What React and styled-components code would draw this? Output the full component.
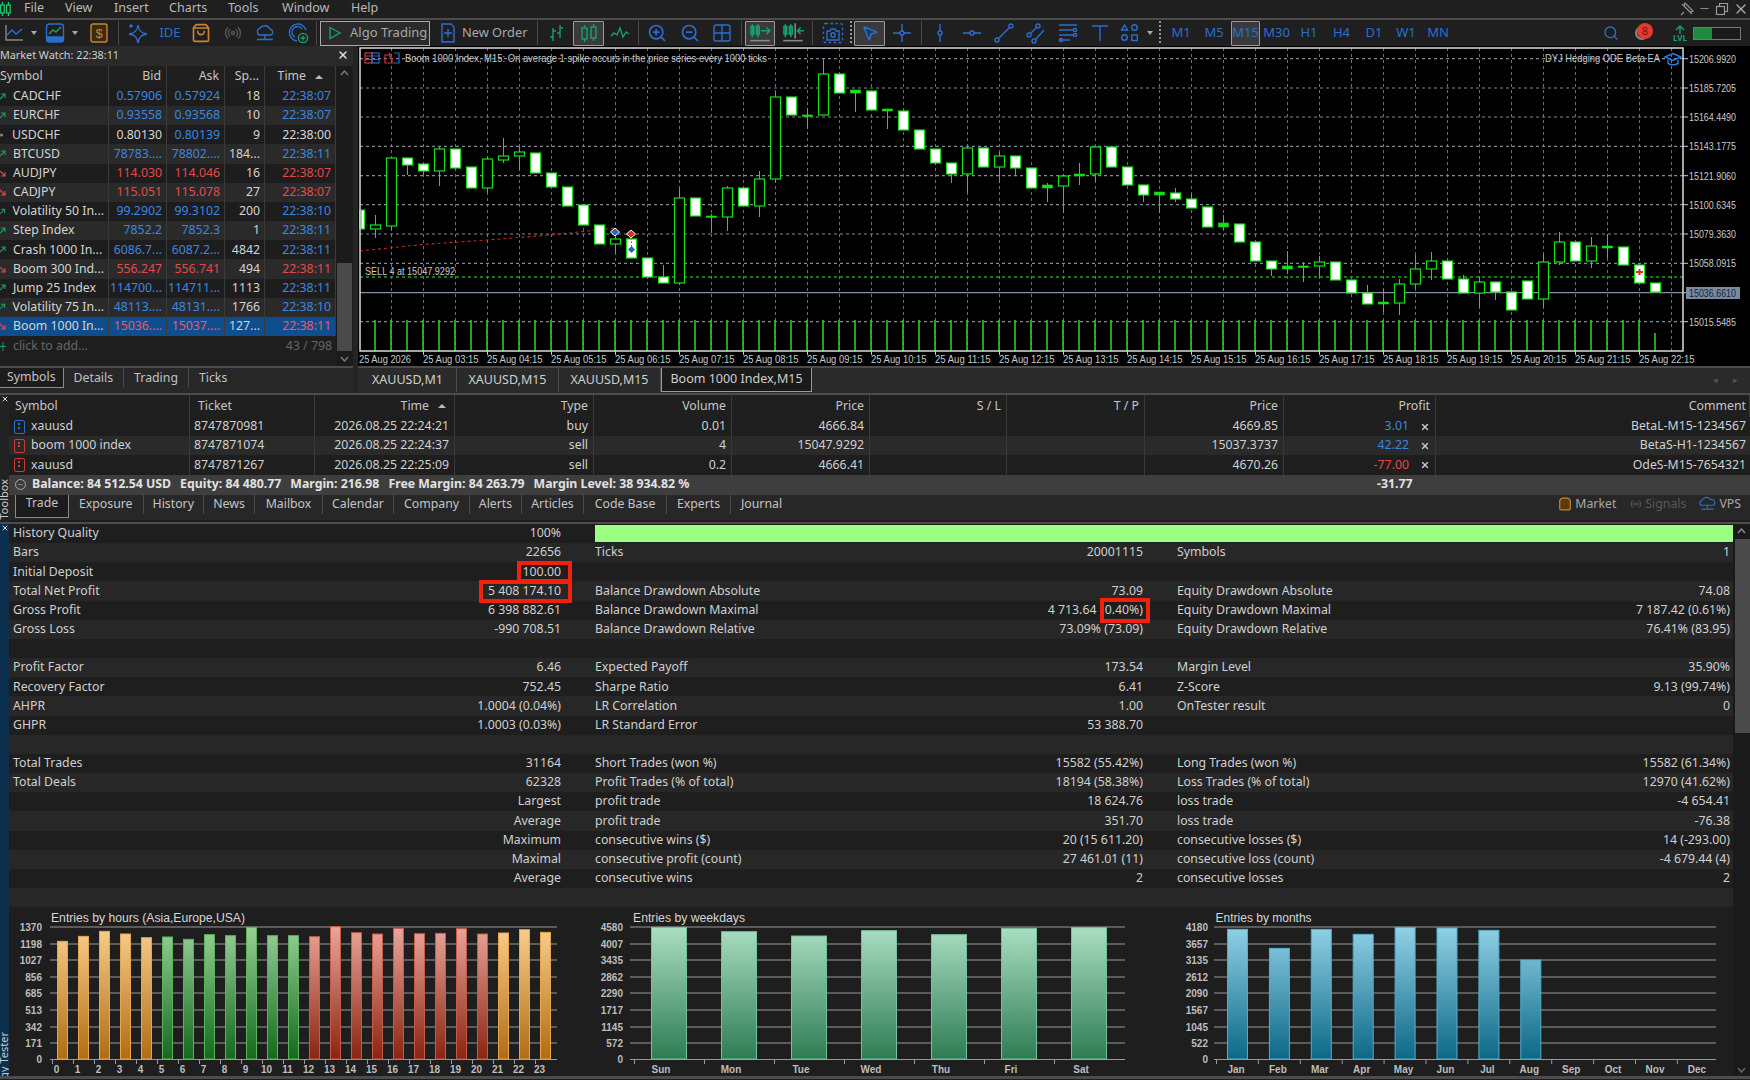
import React from 'react';
import styled, { createGlobalStyle } from 'styled-components';
import { Search, ZoomIn, ZoomOut, ShoppingBag, Radio, MousePointer2, X, Minus } from 'lucide-react';

const Global = createGlobalStyle`
  html, body { margin: 0; padding: 0; background: #1e1e1e; }
  * { box-sizing: border-box; }
`;

const BLUE = '#2a6fd0';
const ORANGE = '#c9842e';
const TEAL = '#16a06c';

const Page = styled.div`
  width: 1750px; height: 1080px; overflow: hidden; background: #1e1e1e;
  font-family: "Noto Sans", "Open Sans", sans-serif; font-size: 12.3px; color: #d4d4d4;
  display: flex; flex-direction: column; line-height: 1.35;
`;
const MenuBar = styled.div`
  height: 20px; flex: none; display: flex; align-items: center; position: relative;
  border-bottom: 2px solid #4c4c4c; background: #1f1f1f; padding-bottom: 1px;
`;
const MenuItem = styled.span`
  width: ${p => p.$w}px; flex: none; color: #b9b9b9; font-size: 12.5px;
`;
const Logo = styled.svg` width: 12px; height: 16px; margin: 0 12px 0 0; flex: none; `;
const WinButtons = styled.div`
  margin-left: auto; display: flex; align-items: center; gap: 4px; padding-right: 1px; color: #9a9a9a;
`;
const Toolbar = styled.div`
  height: 26px; flex: none; display: flex; align-items: center; background: #1f1f1f; position: relative;
`;
const Tool = styled.div`
  width: ${p => p.$w || 32}px; height: 25px; flex: none; display: flex; align-items: center; justify-content: center;
  color: ${p => p.$c || BLUE}; font-size: 13px;
  ${p => p.$active ? 'border: 1.5px solid #9a9a9a; border-radius: 1px; background: #3a3a3a; ' : ''}
`;
const Sep = styled.div`
  width: 1px; height: 24px; background: #4a4a4a; flex: none; margin: 0 ${p => p.$m || 2}px;
`;
const Dots = styled.div`
  width: 2px; height: 24px; flex: none; margin: 0 ${p => p.$m || 2}px;
  background: repeating-linear-gradient(to bottom, #999 0 2px, transparent 2px 4px);
`;
const Caret = styled.div`
  width: 0; height: 0; border-left: 3.5px solid transparent; border-right: 3.5px solid transparent;
  border-top: 4px solid #aaa; flex: none; margin-left: 3px;
`;
const AlgoBtn = styled.div`
  width: 110px; height: 25px; flex: none; display: flex; align-items: center; gap: 8px; padding-left: 7px;
  border: 1.5px solid #a8a8a8; background: #2a2a2a; color: #a8a8a8; font-size: 13px;
`;
const OrderBtn = styled.div`
  width: 102px; height: 25px; flex: none; display: flex; align-items: center; gap: 3px; padding-left: 4px;
  color: #a8a8a8; font-size: 12.8px;
`;
const Gap = styled.div` flex: none; width: ${p => p.$w}px; `;
const Badge = styled.span`
  position: absolute; right: -6px; top: -5px; width: 16px; height: 16px; border-radius: 50%;
  background: #e23a2c; color: #6e1a12; font-size: 11px; display: flex; align-items: center; justify-content: center;
`;
const BellWrap = styled.div`
  position: relative; width: 14px; height: 14px; border-radius: 50%; border: 2px solid #888; margin-left: 16px; flex: none;
`;
const Level = styled.div`
  width: 20px; flex: none; margin-left: 21px; color: ${TEAL}; font-size: 8px; line-height: 1; font-weight: 700; display: flex; flex-direction: column; align-items: center;
`;
const Progress = styled.div`
  width: 48px; height: 13px; margin-left: 3px; flex: none; border: 1px solid #777; background: #1a1a1a;
  &::before { content: ''; display: block; width: 18px; height: 100%; background: #1d8a3e; }
`;

/* workspace */
const Workspace = styled.div` height: 347px; flex: none; display: flex; `;
const Left = styled.div` width: 353px; flex: none; display: flex; flex-direction: column; `;
const MWTitle = styled.div`
  height: 20px; flex: none; display: flex; align-items: center; justify-content: space-between;
  background: #2a2a2a; padding: 0 4px 2px 0; color: #cfcfcf; font-size: 10.8px;
`;
const MWBody = styled.div` flex: none; height: 300px; display: flex; `;
const MWTable = styled.div` width: 336px; flex: none; display: flex; flex-direction: column; `;
const MWHead = styled.div`
  height: 21px; flex: none; display: grid; grid-template-columns: 109px 58px 58px 40px 71px; background: #1f1f1f;
`;
const HCell = styled.div`
  display: flex; align-items: center; justify-content: ${p => p.$left ? 'flex-start' : 'flex-end'};
  padding: 0 ${p => p.$pr ?? 5}px 0 ${p => p.$pl ?? 0}px; border-right: 1px solid #3a3a3a; color: #c6c6c6; overflow: hidden; gap: 9px;
`;
const MWRow = styled.div`
  height: 19.17px; flex: none; display: grid; grid-template-columns: 109px 58px 58px 40px 71px;
  background: ${p => p.$sel ? '#0e4e8e' : p.$alt ? '#2a2a2a' : '#1d1d1d'};
`;
const Cell = styled.div`
  display: flex; align-items: center; justify-content: ${p => p.$left ? 'flex-start' : 'flex-end'};
  padding-right: 4px; border-right: 1px solid #3b3b3b; overflow: hidden; white-space: nowrap;
  color: ${p => p.$c || '#d4d4d4'};
  gap: 7px;
`;
const AddRow = styled.div`
  height: 20px; flex: none; display: flex; align-items: center; justify-content: space-between; color: #666; padding: 0 4px 0 0;
`;
const AddLabel = styled.span` display: flex; align-items: center; gap: 7px; `;
const MWScroll = styled.div`
  width: 17px; flex: none; position: relative; background: #1b1b1b; display: flex; flex-direction: column; align-items: center;
  justify-content: space-between; padding: 4px 0; color: #666;
  &::before { content: ''; position: absolute; left: 1px; right: 1px; top: 197px; height: 88px; background: #4a4a4a; }
`;
const SmallTabs = styled.div`
  margin-top: auto; height: 27px; flex: none; display: flex; align-items: flex-start; border-top: 2px solid #4c4c4c; background: #272727;
`;
const SmallTab = styled.div`
  height: 20px; display: flex; align-items: center; flex: none; padding: 0 ${p => p.$p || 10}px; color: #c2c2c2;
  ${p => p.$active ? 'background:#1c1c1c; border-right:1.5px solid #8a8a8a; border-bottom:1.5px solid #8a8a8a; margin-right:0;' : 'border-right:1px solid #4a4a4a;'}
  ${p => p.$last ? 'border-right:none;' : ''}
`;
const Splitter = styled.div` width: 5px; flex: none; background: #242424; `;
const ChartCol = styled.div` flex: 1; min-width: 0; display: flex; flex-direction: column; background: #000; `;
const ChartSvg = styled.svg` display: block; flex: none; `;
const ChartTabs = styled.div`
  height: 27px; flex: none; display: flex; align-items: flex-start; background: #2a2a2a; border-top: 2px solid #4c4c4c; padding-left: 1px;
  position: relative;
`;
const ChartTab = styled.div`
  height: 24px; flex: none; display: flex; align-items: center; justify-content: center; width: ${p => p.$w}px;
  color: #cfcfcf; font-size: 12.5px;
  ${p => p.$active ? 'background:#1a1a1a; border-left:1.5px solid #9a9a9a; border-right:1.5px solid #9a9a9a; border-bottom:1.5px solid #9a9a9a;' : 'border-right:1px solid #4c4c4c;'}
`;
const TabArrows = styled.div`
  position: absolute; right: 12px; top: 6px; display: flex; gap: 15px; color: #555; font-size: 9px;
`;

/* toolbox */
const Section = styled.div` flex: none; display: flex; height: ${p => p.$h}px; border-top: 2px solid #4c4c4c; `;
const Strip = styled.div`
  width: 9px; flex: none; display: flex; flex-direction: column; justify-content: space-between; align-items: center; overflow: hidden;
  background: ${p => p.$navy ? '#0d2f4e' : '#222'}; color: #d8d8d8; font-size: 11px;
`;
const StripLabel = styled.span`
  writing-mode: vertical-rl; transform: rotate(180deg); white-space: nowrap; font-size: 11px; color: #ccc; margin-bottom: ${p => p.$b || 0}px;
`;
const Col = styled.div` flex: 1; min-width: 0; display: flex; flex-direction: column; `;
const tradeCols = '181px 125px 140px 139px 138px 138px 137px 138px 139px 152px 1fr';
const TradeHead = styled.div`
  height: 22px; flex: none; display: grid; grid-template-columns: ${tradeCols}; background: #1f1f1f;
`;
const TradeRow = styled.div`
  height: 19.2px; flex: none; display: grid; grid-template-columns: ${tradeCols}; background: ${p => p.$alt ? '#2a2a2a' : '#1e1e1e'};
`;
const TCell = styled.div`
  display: flex; align-items: center; justify-content: ${p => p.$left ? 'flex-start' : 'flex-end'};
  padding: 0 ${p => p.$left ? 0 : (p.$noline ? 3 : 5)}px 0 ${p => p.$left ? 4 : 0}px;
  border-right: 1px solid ${p => p.$noline ? 'transparent' : '#3a3a3a'}; color: ${p => p.$c || '#d0d0d0'}; white-space: nowrap; gap: 6px;
`;
const SymIcon = styled.span`
  width: 11px; height: 14px; border: 1.5px solid ${p => p.$c}; border-radius: 2px; flex: none; position: relative; margin-left: 1px;
  &::after { content: ''; position: absolute; left: 3px; top: 2px; width: 2px; height: 7px;
    background: repeating-linear-gradient(to bottom, ${p => p.$c} 0 2px, transparent 2px 3.5px); }
`;
const Profit = styled.span` color: ${p => p.$c}; `;
const CloseMark = styled.span` color: #c8c8c8; display: inline-flex; margin-left: 5px; `;
const Summary = styled.div`
  height: 20px; flex: none; display: flex; align-items: center; background: #3e3e3e; color: #e2e2e2; font-weight: 700; font-size: 12.3px; position: relative; padding-left: 6px; gap: 6px; white-space: nowrap;
`;
const MinusCircle = styled.span`
  width: 11px; height: 11px; border-radius: 50%; border: 1px solid #aaa; display: inline-flex; align-items: center; justify-content: center; color: #aaa; flex: none;
`;
const SumItem = styled.span` margin-right: 3px; `;
const Total = styled.span` position: absolute; left: 1368px; color: #e2e2e2; `;
const TBTabs = styled.div`
  height: 25.4px; flex: none; display: flex; align-items: flex-start; background: #272727; padding-left: 6px; position: relative;
`;
const TBTab = styled.div`
  height: 19px; flex: none; display: flex; align-items: center; justify-content: center; width: ${p => p.$w}px; color: #c4c4c4;
  ${p => p.$active ? 'border-left:1.5px solid #8a8a8a; border-right:1.5px solid #8a8a8a; border-bottom:1.5px solid #8a8a8a; background:#1c1c1c; height:23px; padding-bottom:4px;' : p.$last ? '' : 'border-right:1px solid #4a4a4a;'}
`;
const TBRight = styled.div`
  position: absolute; right: 9px; top: 1px; display: flex; align-items: center; color: #a8a8a8; gap: 3px;
`;
const DimText = styled.span` color: #5a5a5a; margin-right: 10px; `;
const MarketText = styled.span` margin-right: 11px; `;

/* report */
const TesterBody = styled.div` flex: 1; min-width: 0; display: flex; position: relative; `;
const ReportScroll = styled.div`
  width: 17px; flex: none; background: #1a1a1a; position: relative; padding-top: 4px; display: flex; flex-direction: column; align-items: center; justify-content: space-between; color: #777;
  padding-bottom: 3px;
  &::before { content: ''; position: absolute; left: 2px; right: 0; top: 15px; height: 194px; background: #4a4a4a; }
`;
const RepRow = styled.div`
  height: 19.17px; flex: none; display: grid;
  grid-template-columns: 300px 248px 34px 250px 298px 34px 250px 303px;
  padding-left: 4px; align-items: center; white-space: nowrap;
  background: ${p => p.$alt ? '#272727' : '#1e1e1e'};
`;
const Lab = styled.div` color: #d0d0d0; `;
const Val = styled.div` color: #d0d0d0; text-align: right; `;
const QualBar = styled.div`
  grid-column: 4 / 9; height: 17px; background: #9bff84; width: 1138px;
`;
const Boxed = styled.span`
  position: relative; display: inline-block; margin-left: ${p => p.$ml || 0}px;
  &::after { content: ''; position: absolute; top: ${p => p.$t ?? -5}px; bottom: ${p => p.$bo ?? -5}px; left: -${p => p.$l}px; right: -${p => p.$r}px; border: 4px solid #f4200e; }
`;
const Charts = styled.div` flex: 1; display: flex; min-height: 0; background: #1e1e1e; `;
const BottomBar = styled.div` height: 3px; flex: none; background: #4c4c4c; `;
const TickText = styled.text`
  font-family: "Liberation Sans", Arial, sans-serif; font-size: 10.5px; fill: ${p => p.$fill || '#c9c9c9'};
`;
const BoldText = styled.text`
  font-family: "Liberation Sans", Arial, sans-serif; font-size: 10px; font-weight: 700; fill: #bdbdbd;
`;
const TitleText = styled.text`
  font-family: "Liberation Sans", Arial, sans-serif; font-size: 12px; fill: #d6d6d6;
`;

/* ---------- icons ---------- */
const Ic = ({ c = BLUE, s = 22, children, w = 1.4 }) => (
  <svg width={s} height={s} viewBox="0 0 22 22" fill="none" stroke={c} strokeWidth={w}>{children}</svg>
);
const Arrow = ({ c, down }) => (
  <svg width="6" height="8" viewBox="0 0 6 8" fill="none" stroke={c} strokeWidth="1.1">
    {down ? <path d="M0 2L5 7M5 3V7H1" /> : <path d="M0 6L5 1M1 1H5V5" />}
  </svg>
);
const I = {
  line: <Ic c={BLUE}><path d="M3 3V18H20" stroke="#888" /><path d="M4 13l5-5 4 4 6-5" /></Ic>,
  blue: <Ic c={BLUE}><rect x="2.5" y="2" width="17" height="18" rx="3" /><path d="M3 15h16v4H3z" fill={BLUE} /><path d="M5 12l4-4 3 2 5-5" stroke={TEAL} /></Ic>,
  dollar: <Ic c={ORANGE}><rect x="3" y="2" width="16" height="18" rx="2" fill="#3a2a12" /><text x="11" y="16" textAnchor="middle" fontSize="13" fill={ORANGE} stroke="none" fontFamily="Liberation Sans">$</text></Ic>,
  sparkle: <Ic c={BLUE}><path d="M11 3C12 9 14 11 20 12C14 13 12 15 11 21C10 15 8 13 2 12C8 11 10 9 11 3Z" /><path d="M4 2v4M2 4h4" /></Ic>,
  cloud: <Ic c={BLUE}><path d="M5 13a4 4 0 0 1 1-7 6 6 0 0 1 10 1 3.2 3.2 0 0 1 1 6Z" /><path d="M11 13v4M3 17.5h16" /></Ic>,
  globe: <Ic c={BLUE}><path d="M19 8a8.5 8.5 0 1 0-9 11" /><path d="M15 7a5.5 5.5 0 1 0-7 8" /><circle cx="16" cy="16" r="4.6" stroke={TEAL} /><path d="M16 13.5v5M13.5 16h5" stroke={TEAL} /></Ic>,
  doc: <Ic c={BLUE}><path d="M5 2h9l3 3v15H5z" /><path d="M11 7v8M7 11h8" /></Ic>,
  bars: <Ic c={TEAL}><path d="M7 6V19M4 15h3M7 9h3M14 3v13M11 11h3M14 6h3" /></Ic>,
  candles: <Ic c={TEAL}><rect x="4" y="6" width="5" height="11" /><path d="M6.5 3v3M6.5 17v3" /><rect x="13" y="5" width="5" height="11" /><path d="M15.5 2v3M15.5 16v3" /></Ic>,
  zig: <Ic c={TEAL}><path d="M2 14l3-3 3 2 3-7 3 9 3-5 3 2" /></Ic>,
  grid: <Ic c={BLUE}><rect x="3" y="3" width="16" height="16" rx="2" /><path d="M3 11h16M11 3v16" /></Ic>,
  autos: <Ic c={TEAL} s={24}><path d="M4 3v12M9 3v12" /><rect x="2.7" y="5" width="2.6" height="7" /><rect x="7.7" y="5" width="2.6" height="7" /><path d="M12 9h8M17 6l3 3-3 3" /><path d="M2 18h18" stroke="#888" /></Ic>,
  shift: <Ic c={TEAL} s={24}><path d="M4 3v12M9 3v12" /><rect x="2.7" y="5" width="2.6" height="7" /><rect x="7.7" y="5" width="2.6" height="7" /><path d="M13 2v14" stroke="#888" /><path d="M21 9h-6M18 6l-3 3 3 3" /><path d="M2 18h18" stroke="#888" /></Ic>,
  camera: <Ic c={BLUE}><rect x="1.5" y="1.5" width="19" height="19" rx="2" strokeDasharray="2.5 2.5" /><path d="M5 9h3l1-2h4l1 2h3v9H5z" fill="#1f1f1f" /><circle cx="11" cy="13" r="2.2" /></Ic>,
  cross: <Ic c={BLUE}><path d="M11 2v7M11 13v7M2 11h7M13 11h7" /><circle cx="11" cy="11" r="2" /></Ic>,
  vline: <Ic c={BLUE}><path d="M11 2v7M11 13v7" /><circle cx="11" cy="11" r="2" /></Ic>,
  hline: <Ic c={BLUE}><path d="M2 11h7M13 11h7" /><circle cx="11" cy="11" r="2" /></Ic>,
  trend: <Ic c={BLUE}><circle cx="4" cy="18" r="2" /><circle cx="18" cy="4" r="2" /><path d="M5.5 16.5L16.5 5.5" /></Ic>,
  channel: <Ic c={BLUE}><circle cx="4" cy="13" r="2" /><circle cx="13" cy="4" r="2" /><circle cx="9" cy="19" r="2" /><path d="M5.5 11.5L11.5 5.5M10.5 17.5L19 8" /></Ic>,
  fib: <Ic c={BLUE}><path d="M2 3h18M2 8h14M2 13h14M2 18h11" /><circle cx="18" cy="8" r="1.6" /><circle cx="18" cy="13" r="1.6" /><circle cx="4" cy="18" r="1.6" /></Ic>,
  text: <Ic c={BLUE}><path d="M3 4h16M11 4v15" /></Ic>,
  shapes: <Ic c={BLUE}><path d="M5.5 3l3 5h-6z" /><circle cx="15.5" cy="5.5" r="2.8" /><circle cx="5.5" cy="15.5" r="2.8" /><rect x="12.8" y="13" width="5.5" height="5.5" /></Ic>,
  vps: <Ic c={BLUE} s={17}><path d="M4 12a3 3 0 0 1 0-6 6 6 0 0 1 11-1 3.5 3.5 0 0 1 3 7Z" /><path d="M11 12v4M3 17h16" /></Ic>,
};

/* ---------- candle data: k, top, bottom, wickTop, wickBottom, type ---------- */
const C = [
  [-1,210,229,210,229,1],[0,225,229,215,238,0],[1,158,226,157,230,0],[2,158,165,158,175,1],[3,164,171,164,175,1],
  [4,149,171,147,186,0],[5,149,168,149,168,1],[6,167,188,167,188,1],[7,159,188,157,193,0],[8,156,160,138,163,0],
  [9,152,156,147,170,0],[10,153,173,153,173,1],[11,173,187,173,187,1],[12,187,206,187,206,1],[13,205,225,205,225,1],
  [14,225,244,225,244,1],[15,239,244,235,253,0],[16,239,258,239,258,1],[17,258,277,258,277,1],[18,277,283,265,283,1],
  [19,198,283,188,285,0],[20,198,216,198,216,1],[21,216,217,214,233,2],[22,188,217,186,231,0],[23,188,206,188,206,1],
  [24,179,206,171,217,0],[25,97,179,92,182,0],[26,97,115,97,115,1],[27,115,116,108,129,2],[28,74,115,59,115,0],
  [29,74,93,74,93,1],[30,90,93,90,112,2],[31,91,110,91,110,1],[32,109,111,109,129,2],[33,111,130,111,130,1],
  [34,130,149,130,149,1],[35,149,163,149,165,1],[36,163,174,163,183,1],[37,148,174,147,193,0],[38,148,167,148,167,1],
  [39,156,167,152,183,0],[40,156,168,156,176,1],[41,168,188,168,188,1],[42,185,188,183,202,2],[43,176,186,174,213,0],
  [44,174,176,163,185,2],[45,147,174,147,182,0],[46,147,167,147,167,1],[47,167,185,167,185,1],[48,185,195,185,202,1],
  [49,192,195,192,213,2],[50,193,199,188,202,1],[51,199,208,194,208,1],[52,207,227,207,227,1],[53,223,227,215,230,2],
  [54,224,242,224,242,1],[55,242,261,242,261,1],[56,261,269,261,276,1],[57,266,269,251,274,2],[58,266,267,262,282,2],
  [59,262,266,256,278,0],[60,262,280,262,280,1],[61,280,293,280,293,1],[62,293,304,285,304,1],[63,302,304,289,312,2],
  [64,284,303,279,315,0],[65,269,284,255,289,0],[66,261,269,252,280,0],[67,261,279,261,279,1],[68,279,293,275,293,1],
  [69,282,293,277,307,0],[70,282,292,282,300,1],[71,292,310,292,310,1],[72,281,299,281,299,1],[73,262,299,254,307,0],
  [74,242,262,232,265,0],[75,242,261,242,261,1],[76,246,261,237,268,0],[77,246,248,234,258,2],[78,247,265,247,265,1],
  [79,265,283,265,283,1],[80,283,292,283,292,1],
];
const priceLabels = [[15206.9920,58.7],[15185.7205,88],[15164.4490,117],[15143.1775,146.3],[15121.9060,175.7],[15100.6345,204.7],[15079.3630,234],[15058.0915,263.3],[15015.5485,321.7]];
const FR = { l: 360, r: 1683, t: 48, b: 351 };
const CANDLE = '#16e016';

const CandleChart = () => {
  const vg = []; for (let k = 0; k <= 40; k++) vg.push(391 + 32 * k);
  const hours = []; for (let h = 3; h <= 22; h++) hours.push(h);
  return (
    <ChartSvg width="1392" height="320" viewBox="358 46 1392 320">
      <rect x="358" y="46" width="1392" height="320" fill="#000" />
      {vg.map(x => <line key={x} x1={x + 0.5} x2={x + 0.5} y1={FR.t} y2={FR.b} stroke="#66727f" strokeDasharray="3 3" />)}
      {priceLabels.map(([p, y]) => <line key={p} x1={FR.l} x2={FR.r} y1={y} y2={y} stroke="#7d8a99" strokeWidth="1.2" strokeDasharray="3 3" />)}
      <polyline points="360,251 423,244.5 487,240 551,235 615,228" fill="none" stroke="#c8281e" strokeWidth="1.1" strokeDasharray="3 3" />
      <line x1={FR.l} x2={FR.r} y1="277" y2="277" stroke="#22a022" strokeWidth="1.3" strokeDasharray="3 3" />
      <line x1={FR.l} x2={FR.r} y1="292.7" y2="292.7" stroke="#7f8fa0" strokeWidth="1.2" />
      {C.filter(c => c[0] >= 0).map(([k]) => {
        const x = 375 + 16 * k;
        return <line key={k} x1={x} x2={x} y1={k === 80 ? 333 : 320} y2={FR.b} stroke="#2fc82f" strokeWidth="1.6" />;
      })}
      {C.map(([k, t, b, wt, wb, ty]) => {
        const x = 375 + 16 * k + 0.5;
        return (
          <g key={k} stroke={CANDLE}>
            <line x1={x} x2={x} y1={wt} y2={wb} strokeWidth="1" />
            {ty === 2
              ? <rect x={x - 5} y={t} width="10" height={Math.max(b - t, 1.4)} fill={CANDLE} strokeWidth="0.6" />
              : <rect x={k === -1 ? 361 : x - 5} y={t} width={k === -1 ? 3.5 : 10} height={b - t} fill={ty === 1 ? '#fff' : '#000'} strokeWidth="1.2" />}
          </g>
        );
      })}
      {/* trade markers */}
      <path d="M615 228l4.5 4-4.5 4-4.5-4z" fill="#2a66c8" stroke="#fff" strokeWidth="1" />
      <path d="M631 230l4.5 4-4.5 4-4.5-4z" fill="#e02a20" stroke="#fff" strokeWidth="1" />
      <line x1="631.5" x2="631.5" y1="238" y2="248" stroke="#e02a20" strokeDasharray="1.5 2" />
      <path d="M631.5 246l3.5 3.5-3.5 3.5-3.5-3.5z" fill="#2a5ec0" />
      <path d="M1639.5 269v6M1636 272h7" stroke="#e02a20" strokeWidth="2" />
      <rect x="360" y="48" width="1323" height="303" fill="none" stroke="#dcdcdc" strokeWidth="1.5" />
      {/* axis ticks */}
      {priceLabels.map(([p, y]) => <line key={p} x1="1683" x2="1688" y1={y} y2={y} stroke="#ccc" />)}
      {priceLabels.map(([p, y]) => <TickText key={p} x="1689" y={y + 4} textLength="47" lengthAdjust="spacingAndGlyphs">{p.toFixed(4)}</TickText>)}
      <rect x="1686" y="287" width="54" height="12" fill="#778a9f" />
      <TickText $fill="#1a2430" x="1689" y="297" textLength="47" lengthAdjust="spacingAndGlyphs">15036.6610</TickText>
      <line x1="1683" x2="1686" y1="292.7" y2="292.7" stroke="#ccc" />
      <TickText x="359" y="363" textLength="52" lengthAdjust="spacingAndGlyphs">25 Aug 2026</TickText>
      {hours.map((h, i) => {
        const x = 423 + 64 * i;
        return (
          <g key={h}>
            <line x1={x + 0.5} x2={x + 0.5} y1="351" y2="355" stroke="#ccc" />
            <TickText x={x} y="363" textLength="55.6" lengthAdjust="spacingAndGlyphs">{`25 Aug ${String(h).padStart(2, '0')}:15`}</TickText>
          </g>
        );
      })}
      <TickText x="365" y="275" textLength="90" lengthAdjust="spacingAndGlyphs">SELL 4 at 15047.9292</TickText>
      <TickText x="405" y="62" textLength="362" lengthAdjust="spacingAndGlyphs">Boom 1000 Index, M15:  On average 1 spike occurs in the price series every 1000 ticks</TickText>
      <TickText x="1545" y="62" textLength="115" lengthAdjust="spacingAndGlyphs">DYJ Hedging ODE Beta EA</TickText>
      {/* top-left icons */}
      <g fill="none" strokeWidth="1.2">
        <rect x="365" y="53" width="7" height="10" stroke="#e03030" />
        <rect x="372" y="53" width="7" height="10" stroke="#2a6fd0" />
        <path d="M365 56h7M365 59.5h7" stroke="#e03030" />
        <path d="M372 56h7M372 59.5h7" stroke="#2a6fd0" />
        <path d="M385 55h4l1-2v5l2 0v5h-7z" stroke="#e03030" />
        <path d="M394 53h5v10h-6" stroke="#2a6fd0" />
      </g>
      <path d="M1665 57l8-3.5 8 3.5-8 3.5z M1668 60v3.5q5 2.5 10 0V60" fill="none" stroke="#2a7fe0" strokeWidth="1.4" />
    </ChartSvg>
  );
};

/* ---------- bottom bar charts ---------- */
const GRID = [927, 944, 960, 977, 993, 1010, 1027, 1043];
const BOTTOM = 1059;
const PAL = {
  o: ['#fbcf8c', '#b06c14', '#e7a550'], g: ['#98d298', '#126a1c', '#5cb35c'], r: ['#eca69b', '#8a2410', '#c85a48'],
  t: ['#abdfc3', '#2e7c54', '#74c29a'], b: ['#91d2e6', '#0c6887', '#53aecb'],
};
const GradDefs = ({ id }) => (
  <defs>
    {Object.entries(PAL).map(([k, v]) => (
      <linearGradient key={k} id={`${id}${k}`} x1="0" y1="926" x2="0" y2="1059" gradientUnits="userSpaceOnUse">
        <stop offset="0" stopColor={v[0]} /><stop offset="1" stopColor={v[1]} />
      </linearGradient>
    ))}
  </defs>
);
const BarChart = ({ id, x0, w, title, titleX, titleW, yRight, yLabels, gridL, gridR, bars, ticks, xLabels }) => (
  <ChartSvg width={w} height="170" viewBox={`${x0} 907 ${w} 170`}>
    <GradDefs id={id} />
    <TitleText x={titleX} y="922" textLength={titleW} lengthAdjust="spacingAndGlyphs">{title}</TitleText>
    {GRID.map(y => <line key={y} x1={gridL} x2={gridR} y1={y} y2={y} stroke="#707070" strokeWidth="1.7" />)}
    {GRID.map((y, i) => <BoldText key={y} x={yRight} y={y + 3.5} textAnchor="end">{yLabels[i]}</BoldText>)}
    <BoldText x={yRight} y={BOTTOM + 3.5} textAnchor="end">0</BoldText>
    <line x1={gridL} x2={gridR} y1={BOTTOM + 0.5} y2={BOTTOM + 0.5} stroke="#999" />
    {ticks.map(x => <line key={x} x1={x} x2={x} y1={BOTTOM} y2={BOTTOM + 5} stroke="#999" />)}
    {bars.map((b, i) => (
      <rect key={i} x={b.x + 0.5} y={b.t} width={b.w - 1} height={BOTTOM - b.t} fill={`url(#${id}${b.c})`} stroke={PAL[b.c][2]} strokeWidth="1" />
    ))}
    {xLabels.map((l, i) => <BoldText key={i} x={l.x} y="1073" textAnchor="middle">{l.t}</BoldText>)}
  </ChartSvg>
);

const hourTops = [124,109,94,102,113,111,118,104,107,82,107,107,110,80,98,102,85,101,100,86,102,99,89,97];
const hourBars = hourTops.map((t, i) => ({ x: 57 + 21 * i, w: 11, t: 900 + t / 3, c: i < 5 || i > 20 ? 'o' : i < 12 ? 'g' : 'r' }));
const dayTops = [82,95,108,92,104,85,83];
const dayBars = dayTops.map((t, i) => ({ x: 651 + 70 * i, w: 36, t: 900 + t / 3, c: 't' }));
const monTops = [88,145,88,103,82,84,91,180];
const monBars = monTops.map((t, i) => ({ x: 1227 + 41.9 * i, w: 21, t: 900 + t / 3, c: 'b' }));

/* ---------- data ---------- */
const B = '#3b87e0', R = '#e44a4a', W = '#d8d8d8';
const watch = [
  ['CADCHF','0.57906','0.57924','18','22:38:07',B,B,B,'u'],
  ['EURCHF','0.93558','0.93568','10','22:38:07',B,B,B,'u'],
  ['USDCHF','0.80130','0.80139','9','22:38:00',W,B,W,'d'],
  ['BTCUSD','78783....','78802....','184...','22:38:11',B,B,B,'u'],
  ['AUDJPY','114.030','114.046','16','22:38:07',R,R,R,'x'],
  ['CADJPY','115.051','115.078','27','22:38:07',R,R,R,'x'],
  ['Volatility 50 In...','99.2902','99.3102','200','22:38:10',B,B,B,'u'],
  ['Step Index','7852.2','7852.3','1','22:38:11',B,B,B,'u'],
  ['Crash 1000 In...','6086.7...','6087.2...','4842','22:38:11',B,B,B,'u'],
  ['Boom 300 Ind...','556.247','556.741','494','22:38:11',R,R,R,'x'],
  ['Jump 25 Index','114700...','114711...','1113','22:38:11',B,B,B,'u'],
  ['Volatility 75 In...','48113....','48131....','1766','22:38:10',B,B,B,'u'],
  ['Boom 1000 In...','15036....','15037....','127...','22:38:11','#f0586a','#f0586a','#f0586a','x'],
];
const trades = [
  ['xauusd','8747870981','2026.08.25 22:24:21','buy','0.01','4666.84','4669.85','3.01','BetaL-M15-1234567',B,'#2a6fd0'],
  ['boom 1000 index','8747871074','2026.08.25 22:24:37','sell','4','15047.9292','15037.3737','42.22','BetaS-H1-1234567',B,'#d03a3a'],
  ['xauusd','8747871267','2026.08.25 22:25:09','sell','0.2','4666.41','4670.26','-77.00','OdeS-M15-7654321',R,'#d03a3a'],
];
const report = [
  null,
  ['Bars','22656','Ticks','20001115','Symbols','1'],
  ['Initial Deposit',<Boxed key="a" $l={6} $r={11} $t={-3} $bo={-3}>100.00</Boxed>,'','','',''],
  ['Total Net Profit',<Boxed key="b" $l={9} $r={11} $t={-3} $bo={-4}>5 408 174.10</Boxed>,'Balance Drawdown Absolute','73.09','Equity Drawdown Absolute','74.08'],
  ['Gross Profit','6 398 882.61','Balance Drawdown Maximal',<span key="c">4 713.64 <Boxed $ml={5} $l={5} $r={7} $t={-4} $bo={-4}>0.40%)</Boxed></span>,'Equity Drawdown Maximal','7 187.42 (0.61%)'],
  ['Gross Loss','-990 708.51','Balance Drawdown Relative','73.09% (73.09)','Equity Drawdown Relative','76.41% (83.95)'],
  ['','','','','',''],
  ['Profit Factor','6.46','Expected Payoff','173.54','Margin Level','35.90%'],
  ['Recovery Factor','752.45','Sharpe Ratio','6.41','Z-Score','9.13 (99.74%)'],
  ['AHPR','1.0004 (0.04%)','LR Correlation','1.00','OnTester result','0'],
  ['GHPR','1.0003 (0.03%)','LR Standard Error','53 388.70','',''],
  ['','','','','',''],
  ['Total Trades','31164','Short Trades (won %)','15582 (55.42%)','Long Trades (won %)','15582 (61.34%)'],
  ['Total Deals','62328','Profit Trades (% of total)','18194 (58.38%)','Loss Trades (% of total)','12970 (41.62%)'],
  ['','Largest','profit trade','18 624.76','loss trade','-4 654.41'],
  ['','Average','profit trade','351.70','loss trade','-76.38'],
  ['','Maximum','consecutive wins ($)','20 (15 611.20)','consecutive losses ($)','14 (-293.00)'],
  ['','Maximal','consecutive profit (count)','27 461.01 (11)','consecutive loss (count)','-4 679.44 (4)'],
  ['','Average','consecutive wins','2','consecutive losses','2'],
  ['','','','','',''],
];
const tbTabs = [['Exposure',74.5],['History',60.5],['News',51],['Mailbox',68],['Calendar',71],['Company',76],['Alerts',52],['Articles',62],['Code Base',83],['Experts',64],['Journal',61]];

const SymbolIcon = ({ k }) => (
  k === 'd' ? <svg width="5" height="8" viewBox="0 0 5 8"><circle cx="1.5" cy="4" r="1.5" fill="#888" /></svg>
    : <Arrow c={k === 'u' ? TEAL : R} down={k === 'x'} />
);

export default function App() {
  return (
    <Page>
      <Global />
      <MenuBar>
        <Logo viewBox="0 0 12 16" fill="none" stroke="#1fcf6f" strokeWidth="1.2">
          <rect x="0.6" y="4" width="3.6" height="8" /><rect x="6.6" y="4" width="3.6" height="8" /><path d="M2.4 1v3M2.4 12v3M8.4 1v3M8.4 12v3" />
        </Logo>
        <MenuItem $w={41}>File</MenuItem>
        <MenuItem $w={49}>View</MenuItem>
        <MenuItem $w={55}>Insert</MenuItem>
        <MenuItem $w={59}>Charts</MenuItem>
        <MenuItem $w={54}>Tools</MenuItem>
        <MenuItem $w={69}>Window</MenuItem>
        <MenuItem $w={40}>Help</MenuItem>
        <WinButtons>
          <svg width="14" height="14" viewBox="0 0 14 14" fill="none" stroke="#999" strokeWidth="1.1"><path d="M2 2l10 10M5 1l8 8-3 1-6-6zM4 10l-3 3" /></svg>
          <Minus size={13} color="#888" />
          <svg width="14" height="14" viewBox="0 0 14 14" fill="none" stroke="#999" strokeWidth="1.2"><rect x="1.5" y="4.5" width="8" height="8" /><path d="M4.5 4.5v-3h8v8h-3" /></svg>
          <X size={16} color="#aaa" />
        </WinButtons>
      </MenuBar>
      <Toolbar>
        <Tool $w={28}>{I.line}</Tool><Caret /><Gap $w={4} />
        <Tool $w={28}>{I.blue}</Tool><Caret /><Gap $w={4} />
        <Tool $w={34}>{I.dollar}</Tool>
        <Sep />
        <Tool $w={34}>{I.sparkle}</Tool>
        <Tool $w={30}>IDE</Tool>
        <Tool $w={32}><ShoppingBag size={20} color={ORANGE} /></Tool>
        <Tool $w={32}><Radio size={18} color="#555" /></Tool>
        <Tool $w={32}>{I.cloud}</Tool>
        <Tool $w={33}>{I.globe}</Tool>
        <Sep />
        <Gap $w={1} />
        <AlgoBtn>
          <svg width="14" height="14" viewBox="0 0 14 14" fill="none" stroke={TEAL} strokeWidth="1.4"><path d="M2 1.5L12 7 2 12.5Z" /></svg>
          Algo Trading
        </AlgoBtn>
        <Gap $w={3} />
        <OrderBtn>{I.doc}New Order</OrderBtn>
        <Sep />
        <Tool $w={33}>{I.bars}</Tool>
        <Tool $w={31} $active>{I.candles}</Tool>
        <Tool $w={32}>{I.zig}</Tool>
        <Sep $m={2} />
        <Tool $w={32}><ZoomIn size={20} color={BLUE} /></Tool>
        <Tool $w={33}><ZoomOut size={20} color={BLUE} /></Tool>
        <Tool $w={32}>{I.grid}</Tool>
        <Sep $m={3} />
        <Tool $w={30} $active>{I.autos}</Tool>
        <Gap $w={2} />
        <Tool $w={32}>{I.shift}</Tool>
        <Sep $m={3} />
        <Gap $w={1} />
        <Tool $w={31}>{I.camera}</Tool>
        <Dots $m={2} />
        <Tool $w={31} $active><MousePointer2 size={18} color={BLUE} fill="#1f3a60" /></Tool>
        <Tool $w={34}>{I.cross}</Tool>
        <Sep $m={2} />
        <Tool $w={32}>{I.vline}</Tool>
        <Tool $w={32}>{I.hline}</Tool>
        <Tool $w={32}>{I.trend}</Tool>
        <Tool $w={32}>{I.channel}</Tool>
        <Tool $w={32}>{I.fib}</Tool>
        <Tool $w={32}>{I.text}</Tool>
        <Tool $w={28}>{I.shapes}</Tool><Caret /><Gap $w={3} />
        <Dots $m={3} />
        <Gap $w={1} />
        <Tool $w={32}>M1</Tool>
        <Tool $w={34}>M5</Tool>
        <Tool $w={29} $active>M15</Tool>
        <Tool $w={33}>M30</Tool>
        <Tool $w={32}>H1</Tool>
        <Tool $w={33}>H4</Tool>
        <Tool $w={32}>D1</Tool>
        <Tool $w={32}>W1</Tool>
        <Tool $w={32}>MN</Tool>
        <Gap $w={149} />
        <Search size={16} color={BLUE} />
        <BellWrap><Badge>8</Badge></BellWrap>
        <Level>
          <svg width="10" height="9" viewBox="0 0 10 9" fill="none" stroke={TEAL} strokeWidth="1.4"><path d="M1 5l4-4 4 4M5 2v7" /></svg>
          LVL
        </Level>
        <Progress />
      </Toolbar>
      <Workspace>
        <Left>
          <MWTitle><span>Market Watch: 22:38:11</span><X size={12} color="#ddd" strokeWidth={3} /></MWTitle>
          <MWBody>
            <MWTable>
              <MWHead>
                <HCell $left><span>Symbol</span></HCell>
                <HCell>Bid</HCell>
                <HCell>Ask</HCell>
                <HCell>Sp...</HCell>
                <HCell $pr={12}>Time<svg width="8" height="4" viewBox="0 0 8 4"><path d="M0 4L4 0l4 4z" fill="#bbb" /></svg></HCell>
              </MWHead>
              {watch.map((r, i) => (
                <MWRow key={r[0]} $alt={i % 2 === 1} $sel={i === 12}>
                  <Cell $left><SymbolIcon k={r[8]} />{r[0]}</Cell>
                  <Cell $c={r[5]}>{r[1]}</Cell>
                  <Cell $c={r[6]}>{r[2]}</Cell>
                  <Cell>{r[3]}</Cell>
                  <Cell $c={r[7]}>{r[4]}</Cell>
                </MWRow>
              ))}
              <AddRow>
                <AddLabel><svg width="6" height="9" viewBox="0 0 6 9" fill="none" stroke={TEAL}><path d="M0 4.5h6M3 0v9" /></svg>click to add...</AddLabel>
                <span>43 / 798</span>
              </AddRow>
            </MWTable>
            <MWScroll>
              <svg width="9" height="6" viewBox="0 0 9 6" fill="none" stroke="#777" strokeWidth="1.5"><path d="M1 5l3.5-4L8 5" /></svg>
              <svg width="9" height="6" viewBox="0 0 9 6" fill="none" stroke="#777" strokeWidth="1.5"><path d="M1 1l3.5 4L8 1" /></svg>
            </MWScroll>
          </MWBody>
          <SmallTabs>
            <SmallTab $active $p={7}>Symbols</SmallTab>
            <SmallTab>Details</SmallTab>
            <SmallTab>Trading</SmallTab>
            <SmallTab $last>Ticks</SmallTab>
          </SmallTabs>
        </Left>
        <Splitter />
        <ChartCol>
          <CandleChart />
          <ChartTabs>
            <ChartTab $w={98}>XAUUSD,M1</ChartTab>
            <ChartTab $w={102}>XAUUSD,M15</ChartTab>
            <ChartTab $w={102}>XAUUSD,M15</ChartTab>
            <ChartTab $active $w={151}>Boom 1000 Index,M15</ChartTab>
            <TabArrows><span>◂</span><span>▸</span></TabArrows>
          </ChartTabs>
        </ChartCol>
      </Workspace>

      <Section $h={129}>
        <Strip>
          <X size={8} color="#ddd" strokeWidth={3} />
          <StripLabel $b={2}>Toolbox</StripLabel>
        </Strip>
        <Col>
          <TradeHead>
            <HCell $left $pl={6}>Symbol</HCell>
            <HCell $left $pl={8}>Ticket</HCell>
            <HCell $pr={8}>Time<svg width="8" height="4" viewBox="0 0 8 4"><path d="M0 4L4 0l4 4z" fill="#bbb" /></svg></HCell>
            <HCell>Type</HCell><HCell>Volume</HCell><HCell>Price</HCell><HCell>S / L</HCell><HCell>T / P</HCell><HCell>Price</HCell><HCell>Profit</HCell>
            <HCell $pr={3}>Comment</HCell>
          </TradeHead>
          {trades.map((t, i) => (
            <TradeRow key={t[1]} $alt={i === 1}>
              <TCell $left><SymIcon $c={t[10]} />{t[0]}</TCell>
              <TCell $left>{t[1]}</TCell>
              <TCell>{t[2]}</TCell>
              <TCell>{t[3]}</TCell>
              <TCell>{t[4]}</TCell>
              <TCell>{t[5]}</TCell>
              <TCell />
              <TCell />
              <TCell>{t[6]}</TCell>
              <TCell><Profit $c={t[9]}>{t[7]}</Profit><CloseMark><X size={10} strokeWidth={3.4} /></CloseMark></TCell>
              <TCell $noline>{t[8]}</TCell>
            </TradeRow>
          ))}
          <Summary>
            <MinusCircle><Minus size={7} strokeWidth={2} /></MinusCircle>
            <SumItem>Balance: 84 512.54 USD</SumItem>
            <SumItem>Equity: 84 480.77</SumItem>
            <SumItem>Margin: 216.98</SumItem>
            <SumItem>Free Margin: 84 263.79</SumItem>
            <SumItem>Margin Level: 38 934.82 %</SumItem>
            <Total>-31.77</Total>
          </Summary>
          <TBTabs>
            <TBTab $active $w={54}>Trade</TBTab>
            {tbTabs.map(([t, w], i) => <TBTab key={t} $w={w} $last={i === tbTabs.length - 1}>{t}</TBTab>)}
            <TBRight>
              <ShoppingBag size={14} color={ORANGE} fill="#5a3a10" />
              <MarketText>Market</MarketText>
              <Radio size={12} color="#555" />
              <DimText>Signals</DimText>
              {I.vps}
              <span>VPS</span>
            </TBRight>
          </TBTabs>
        </Col>
      </Section>

      <Section $h={554}>
        <Strip $navy>
          <X size={8} color="#ddd" strokeWidth={3} />
          <StripLabel $b={-33}>Strategy Tester</StripLabel>
        </Strip>
        <TesterBody>
          <Col>
            <RepRow>
              <Lab>History Quality</Lab><Val>100%</Val><span />
              <QualBar />
            </RepRow>
            {report.slice(1).map((r, i) => (
              <RepRow key={i} $alt={i % 2 === 0}>
                <Lab>{r[0]}</Lab><Val>{r[1]}</Val><span />
                <Lab>{r[2]}</Lab><Val>{r[3]}</Val><span />
                <Lab>{r[4]}</Lab><Val>{r[5]}</Val>
              </RepRow>
            ))}
            <Charts>
              <BarChart id="h" x0={9} w={581} title="Entries by hours (Asia,Europe,USA)" titleX={51} titleW={194} yRight={42}
                yLabels={[1370,1198,1027,856,685,513,342,171]} gridL={50} gridR={557} bars={hourBars}
                ticks={hourBars.map((_, i) => 52.5 + 21 * i)} xLabels={hourBars.map((_, i) => ({ x: 56.6 + 21 * i, t: i }))} />
              <BarChart id="d" x0={590} w={590} title="Entries by weekdays" titleX={633} titleW={112} yRight={623}
                yLabels={[4580,4007,3435,2862,2290,1717,1145,572]} gridL={630} gridR={1125} bars={dayBars}
                ticks={[634.5,704.5,774.5,844.5,914.5,984.5,1054.5]} xLabels={['Sun','Mon','Tue','Wed','Thu','Fri','Sat'].map((t, i) => ({ x: 661 + 70 * i, t }))} />
              <BarChart id="m" x0={1180} w={536} title="Entries by months" titleX={1215.6} titleW={96} yRight={1208}
                yLabels={[4180,3657,3135,2612,2090,1567,1045,522]} gridL={1214} gridR={1716} bars={monBars}
                ticks={Array.from({ length: 12 }, (_, i) => 1216.5 + 41.9 * i)}
                xLabels={['Jan','Feb','Mar','Apr','May','Jun','Jul','Aug','Sep','Oct','Nov','Dec'].map((t, i) => ({ x: 1236 + 41.9 * i, t }))} />
            </Charts>
          </Col>
          <ReportScroll>
            <svg width="9" height="6" viewBox="0 0 9 6" fill="none" stroke="#888" strokeWidth="1.5"><path d="M1 5l3.5-4L8 5" /></svg>
            <svg width="9" height="6" viewBox="0 0 9 6" fill="none" stroke="#666" strokeWidth="1.5"><path d="M1 1l3.5 4L8 1" /></svg>
          </ReportScroll>
        </TesterBody>
      </Section>
      <BottomBar />
    </Page>
  );
}
